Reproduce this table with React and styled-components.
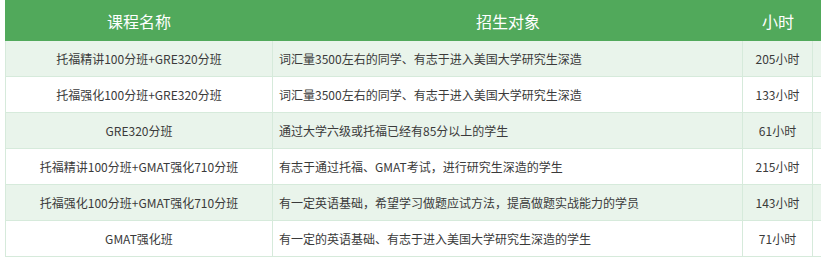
import styled, { createGlobalStyle } from "styled-components";

const GlobalStyle = createGlobalStyle`
  html, body {
    margin: 0;
    padding: 0;
    background: #fff;
  }
  body {
    font-family: "Noto Sans CJK SC", "Noto Sans", sans-serif;
  }
`;

const Wrap = styled.div`
  width: 821px;
  height: 264px;
  overflow: hidden;
  padding-left: 5px;
  box-sizing: border-box;
`;

const Table = styled.div`
  width: 920px;
`;

const cols = "268px 470px 70px 112px";

const Head = styled.div`
  display: grid;
  grid-template-columns: ${cols};
  height: 41px;
  background: #51a95b;
  color: #fff;
  font-size: 16px;
`;

const HeadCell = styled.div`
  display: flex;
  align-items: center;
  justify-content: center;
`;

const Row = styled.div`
  display: grid;
  grid-template-columns: ${cols};
  height: 36px;
  box-sizing: border-box;
  border-bottom: 1px solid #d6eadb;
  background: ${(p) => (p.$alt ? "#e9f4eb" : "#ffffff")};
`;

const Cell = styled.div`
  display: flex;
  align-items: center;
  justify-content: ${(p) => (p.$left ? "flex-start" : "center")};
  padding-left: ${(p) => (p.$left ? "6px" : "0")};
  border-right: 1px solid #d6eadb;
  border-left: ${(p) => (p.$first ? "1px solid #d6eadb" : "none")};
  box-sizing: border-box;
  font-size: 12px;
  color: #3a3a3a;
  white-space: nowrap;
`;

const rows = [
  ["托福精讲100分班+GRE320分班", "词汇量3500左右的同学、有志于进入美国大学研究生深造", "205小时"],
  ["托福强化100分班+GRE320分班", "词汇量3500左右的同学、有志于进入美国大学研究生深造", "133小时"],
  ["GRE320分班", "通过大学六级或托福已经有85分以上的学生", "61小时"],
  ["托福精讲100分班+GMAT强化710分班", "有志于通过托福、GMAT考试，进行研究生深造的学生", "215小时"],
  ["托福强化100分班+GMAT强化710分班", "有一定英语基础，希望学习做题应试方法，提高做题实战能力的学员", "143小时"],
  ["GMAT强化班", "有一定的英语基础、有志于进入美国大学研究生深造的学生", "71小时"],
];

export default function App() {
  return (
    <>
      <GlobalStyle />
      <Wrap>
        <Table>
          <Head>
            <HeadCell>课程名称</HeadCell>
            <HeadCell>招生对象</HeadCell>
            <HeadCell>小时</HeadCell>
            <HeadCell />
          </Head>
          {rows.map((r, i) => (
            <Row key={i} $alt={i % 2 === 0}>
              <Cell $first>{r[0]}</Cell>
              <Cell $left>{r[1]}</Cell>
              <Cell>{r[2]}</Cell>
              <Cell />
            </Row>
          ))}
        </Table>
      </Wrap>
    </>
  );
}
